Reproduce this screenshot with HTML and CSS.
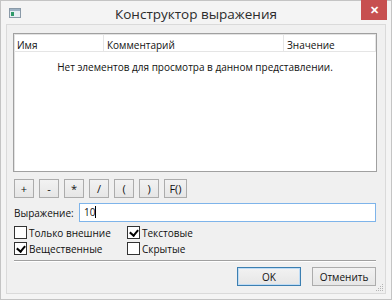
FILE: index.html
```html
<!DOCTYPE html>
<html lang="ru">
<head>
  <meta charset="utf-8" />
  <title>Конструктор выражения</title>
  <link rel="stylesheet" href="styles.css">
</head>
<body>
  <div class="window">
    <!-- Заголовок окна -->
    <header class="titlebar">
      <svg class="app-icon" width="12" height="10" viewBox="0 0 12 10">
        <rect x="0.5" y="0.5" width="11" height="9" fill="#e8eef4" stroke="#8a9aa8"/>
        <rect x="1" y="1" width="10" height="2" fill="#9fb3c4"/>
        <rect x="2" y="4" width="3" height="4" fill="#2f9a6a"/>
      </svg>
      <span class="title">Конструктор выражения</span>
      <button class="close" aria-label="Закрыть">✕</button>
    </header>

    <main class="client">
      <section class="listview">
        <div class="lv-head">
          <span class="col col-name">Имя</span>
          <span class="col col-comment">Комментарий</span>
          <span class="col col-value">Значение</span>
        </div>
        <p class="lv-empty">Нет элементов для просмотра в данном представлении.</p>
      </section>

      <div class="ops">
        <button class="btn op">+</button>
        <button class="btn op">-</button>
        <button class="btn op">*</button>
        <button class="btn op">/</button>
        <button class="btn op">(</button>
        <button class="btn op">)</button>
        <button class="btn op op-fn">F()</button>
      </div>

      <div class="expr-row">
        <label for="expr">Выражение:</label>
        <div class="expr-input" id="expr">10<span class="caret"></span></div>
      </div>

      <div class="checks">
        <label class="chk"><span class="box"></span>Только внешние</label>
        <label class="chk"><span class="box checked"></span>Текстовые</label>
        <label class="chk"><span class="box checked"></span>Вещественные</label>
        <label class="chk"><span class="box"></span>Скрытые</label>
      </div>

      <hr class="sep">

      <div class="actions">
        <button class="btn dlg default">OK</button>
        <button class="btn dlg">Отменить</button>
      </div>

      <svg class="grip" width="8" height="8" viewBox="0 0 8 8">
        <g fill="#b5b5b5">
          <rect x="6" y="0" width="1" height="1"/>
          <rect x="4" y="2" width="1" height="1"/><rect x="6" y="2" width="1" height="1"/>
          <rect x="2" y="4" width="1" height="1"/><rect x="4" y="4" width="1" height="1"/><rect x="6" y="4" width="1" height="1"/>
          <rect x="0" y="6" width="1" height="1"/><rect x="2" y="6" width="1" height="1"/><rect x="4" y="6" width="1" height="1"/><rect x="6" y="6" width="1" height="1"/>
        </g>
      </svg>
    </main>
  </div>
</body>
</html>
```

FILE: styles.css
```css
:root{
  --frame:#f4f4f4;
  --face:#f0f0f0;
  --text:#111;
  --btn-border:#acacac;
  --focus:#7eb4ea;
}

*{box-sizing:border-box;margin:0;padding:0}
body{
  font-family:"Open Sans","Noto Sans",Arial,sans-serif;
  font-size:10px;color:var(--text);
  background:#fff;
}

.window{
  width:392px;height:300px;
  background:var(--frame);
  border:1px solid #c4c4c4;
  display:flex;flex-direction:column;
}

/* —— Заголовок —— */
.titlebar{
  height:23px;flex:none;
  position:relative;
  display:flex;align-items:center;justify-content:center;
}
.app-icon{position:absolute;left:8px;top:7px}
.title{font-size:13.5px;color:#2b2b2b;margin-top:2px}
.close{
  position:absolute;right:4px;top:-1px;
  width:26px;height:20px;border:none;
  background:#c75050;color:#fff;
  font-size:11px;font-weight:700;line-height:20px;
}

/* —— Клиентская область —— */
.client{
  flex:1;position:relative;
  margin:0 5px 5px 5px;
  background:var(--face);
  border:1px solid #dadada;
  padding:8px 8px 0 6px;
}

.listview{
  height:139px;background:#fff;
  border:1px solid #a0a0a0;
  box-shadow:inset 1px 1px 0 #e3e3e3;
}
.lv-head{display:flex;height:18px;border-bottom:1px solid #e5e5e5}
.col{
  padding:4px 3px 0;border-right:1px solid #e5e5e5;
  white-space:nowrap;
}
.col-name{width:90px}
.col-comment{width:180px}
.col-value{width:92px}
.lv-empty{text-align:center;margin-top:8px}

.btn{
  font:inherit;color:var(--text);
  background:linear-gradient(#f2f2f2,#e6e6e6);
  border:1px solid var(--btn-border);
  cursor:pointer;
}

.ops{display:flex;gap:5px;margin-top:7px;padding-left:1px}
.op{width:20px;height:19px;font-size:11px;line-height:16px}
.op-fn{width:23px}

.expr-row{display:flex;align-items:center;margin-top:5px}
.expr-row label{width:66px;padding-left:1px}
.expr-input{
  flex:1;height:19px;margin-right:1px;
  background:#fff;border:1px solid var(--focus);
  padding:2px 4px;line-height:13px;
}
.caret{display:inline-block;width:1px;height:12px;background:#000;vertical-align:-2px}

.checks{
  display:grid;grid-template-columns:113px auto;
  row-gap:3px;margin-top:4px;padding-left:1px;
}
.chk{display:flex;align-items:center;gap:2px;height:13px}
.box{
  width:13px;height:13px;background:#fff;
  border:1px solid #333;position:relative;
}
.box.checked::after{
  content:"";position:absolute;left:3px;top:1px;
  width:4px;height:6px;
  border:solid #000;border-width:0 2px 2px 0;
  transform:rotate(40deg);
}

.sep{
  border:none;border-top:1px solid #a0a0a0;border-bottom:1px solid #fff;
  margin:5px 1px 0 1px;
}

.actions{display:flex;justify-content:flex-end;gap:11px;margin-top:5px;padding-right:1px}
.dlg{width:64px;height:19px;font-size:10px}
.dlg.default{border-color:#3c7fb1;box-shadow:inset 0 0 0 1px #bfdcf5}

.grip{position:absolute;right:1px;bottom:1px}
```
